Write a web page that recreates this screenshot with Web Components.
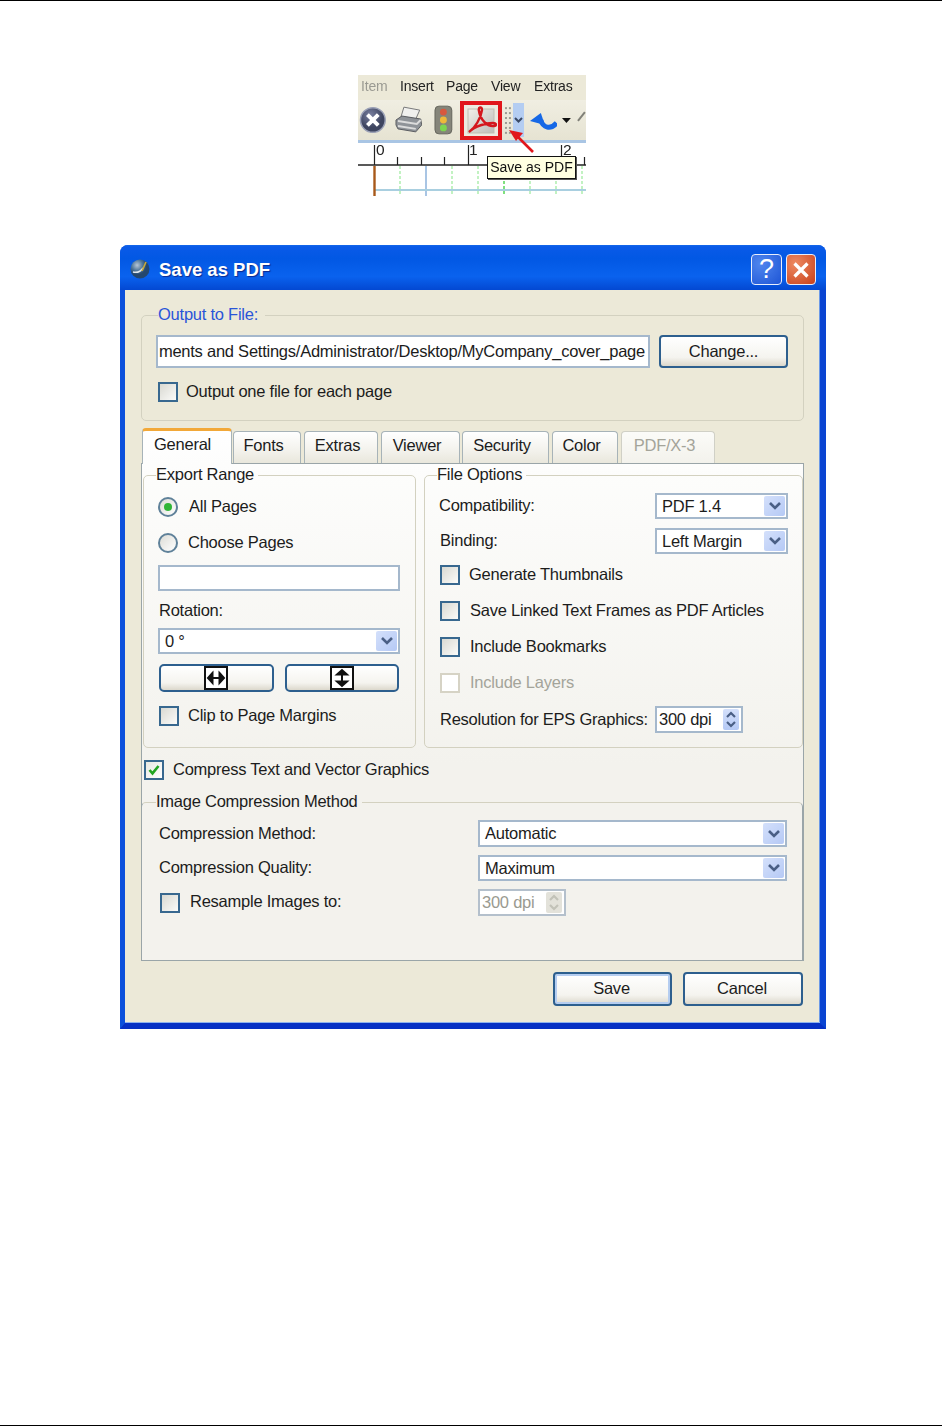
<!DOCTYPE html>
<html lang="en">
<head>
<meta charset="utf-8">
<title>Save as PDF</title>
<style>
html,body{margin:0;padding:0;background:#fff}
body{font-family:"Liberation Sans",Arial,sans-serif;font-size:16.5px;letter-spacing:-.24px;color:#1c1c1c}
</style>
</head>
<body>
<x-page>
  <x-toolstrip></x-toolstrip>
  <x-dialog heading="Save as PDF">
    <x-group legend="Output to File:" accent style="margin:15px 0 0 16px;width:663px;height:116px;--pad:0 14px">
      <x-row style="--c:503px;margin-top:10px;height:33px">
        <x-field style="height:33px;width:494px;justify-content:flex-end">ments and Settings/Administrator/Desktop/MyCompany_cover_page</x-field>
        <x-button style="height:33px;width:129px">Change...</x-button>
      </x-row>
      <x-check style="margin:14px 0 0 2px;--g:8px">Output one file for each page</x-check>
    </x-group>

    <x-tabs style="margin:7px 0 0 17px">
      <x-tab selected style="width:90px">General</x-tab>
      <x-tab style="width:68px;margin-left:1px">Fonts</x-tab>
      <x-tab style="width:74px;margin-left:3px">Extras</x-tab>
      <x-tab style="width:79px;margin-left:3px">Viewer</x-tab>
      <x-tab style="width:87px;margin-left:2px">Security</x-tab>
      <x-tab style="width:66px;margin-left:3px">Color</x-tab>
      <x-tab disabled style="width:94px;margin-left:3px">PDF/X-3</x-tab>
    </x-tabs>

    <x-panel style="margin-left:16px;width:663px;height:498px">
      <x-columns>
        <x-group legend="Export Range" style="width:273px;height:283px;--pad:0 14px">
          <x-radio checked style="margin-top:12px">All Pages</x-radio>
          <x-radio style="margin-top:16px;--rg:10px">Choose Pages</x-radio>
          <x-field style="margin-top:12px;height:26px;width:242px"></x-field>
          <x-label style="margin:10px 0 -1px 1px">Rotation:</x-label>
          <x-combo style="margin-top:8px;width:242px">0 °</x-combo>
          <x-flip style="margin-top:10px"></x-flip>
          <x-check style="margin:14px 0 0 1px;--g:9px">Clip to Page Margins</x-check>
        </x-group>
        <x-group legend="File Options" style="width:379px;height:283px;--pad:0 14px;--c:216px">
          <x-row style="margin-top:8px;height:26px"><x-label>Compatibility:</x-label><x-combo>PDF 1.4</x-combo></x-row>
          <x-row style="margin-top:9px;height:26px"><x-label style="margin-left:1px">Binding:</x-label><x-combo>Left Margin</x-combo></x-row>
          <x-check style="margin:11px 0 0 1px;--g:9px">Generate Thumbnails</x-check>
          <x-check style="margin:16px 0 0 1px">Save Linked Text Frames as PDF Articles</x-check>
          <x-check style="margin:16px 0 0 1px">Include Bookmarks</x-check>
          <x-check disabled style="margin:16px 0 0 1px">Include Layers</x-check>
          <x-row style="margin-top:13px;height:27px"><x-label style="margin-left:1px">Resolution for EPS Graphics:</x-label><x-spin>300 dpi</x-spin></x-row>
        </x-group>
      </x-columns>
      <x-check checked style="margin:12px 0 0 2px;--g:9px">Compress Text and Vector Graphics</x-check>
      <x-group legend="Image Compression Method" closing style="margin:12px 0 0 -1px;width:662px;height:168px;--pad:0 15px 0 17px;--c:319px;--lg:-3px">
        <x-row style="margin-top:8px;height:27px"><x-label>Compression Method:</x-label><x-combo style="height:27px">Automatic</x-combo></x-row>
        <x-row style="margin-top:8px;height:26px"><x-label>Compression Quality:</x-label><x-combo>Maximum</x-combo></x-row>
        <x-row style="margin-top:8px;height:27px"><x-check style="margin-left:1px">Resample Images to:</x-check><x-spin disabled>300 dpi</x-spin></x-row>
      </x-group>
    </x-panel>

    <x-actions>
      <x-button default style="width:119px;height:34px;padding:0 2px 2px 0">Save</x-button>
      <x-button style="width:120px;height:34px;padding:0 2px 2px 0">Cancel</x-button>
    </x-actions>
  </x-dialog>
</x-page>

<script>
class Base extends HTMLElement{
  connectedCallback(){
    if(this.shadowRoot)return;
    this.attachShadow({mode:'open'}).innerHTML='<style>'+this.constructor.css+'</style>'+this.constructor.html(this);
  }
  static html(){return '<slot></slot>'}
}
const def=(name,css,html)=>{
  const C=class extends Base{};
  C.css=css; if(html)C.html=html;
  customElements.define(name,C);
};

def('x-page',`:host{display:flex;flex-direction:column;box-sizing:border-box;width:942px;height:1426px;border-top:1px solid #000;border-bottom:1px solid #000}
.b{filter:blur(.35px);display:flex;flex-direction:column}`,()=>'<div class="b"><slot></slot></div>');

def('x-label',`:host{display:block;line-height:18px;height:20px;white-space:nowrap}`);

def('x-row',`:host{display:grid;grid-template-columns:var(--c,1fr) 1fr;align-items:center}`);

def('x-columns',`:host{display:flex;gap:8px;padding:1px 0 0 1px}`);

def('x-actions',`:host{display:flex;justify-content:flex-end;gap:11px;margin:11px 0 0;padding:0 17px 17px 0}`);

def('x-group',`:host{display:block;box-sizing:border-box;min-width:0;flex:none}
fieldset{box-sizing:border-box;height:100%;margin:0;min-width:0;padding:var(--pad,0);border:1px solid #d3d1c0;border-radius:5px;display:block}
legend{padding:0 4px 0 0;margin-left:var(--lg,-2px);line-height:18px;height:20px;white-space:nowrap}
:host([accent]) legend{color:#2a55d8;margin-left:2px;padding:0 7px 0 0}
:host([closing]) fieldset{border-color:#d3d1c0 #9aa5a8 transparent #9aa5a8;border-bottom:0;border-radius:5px 5px 0 0}`,
 h=>`<fieldset><legend>${h.getAttribute('legend')}</legend><slot></slot></fieldset>`);

def('x-field',`:host{display:flex;align-items:center;box-sizing:border-box;background:#fff;border:2px solid #a5b8cc;overflow:hidden;white-space:nowrap;padding:0 3px 0 0}`);

def('x-button',`:host{display:flex;align-items:center;justify-content:center;box-sizing:border-box;border:2px solid #2d5f8e;border-radius:4px;background:linear-gradient(#fff,#f5f4ef 70%,#dcd8cc);white-space:nowrap}
:host([default]){box-shadow:inset 0 0 0 2px #b5cdf0}`);

def('x-check',`:host{display:flex;align-items:center;height:20px;gap:var(--g,10px);white-space:nowrap}
span{margin-top:-2px}
i{display:block;box-sizing:border-box;width:20px;height:20px;flex:none;border:2px solid #38688f;background:linear-gradient(135deg,#d9d9d2,#fbfbf9)}
svg{display:block;width:16px;height:16px}
:host([checked]) i{background:linear-gradient(135deg,#e8e8e2,#fff)}
:host([disabled]){color:#a4a49a}
:host([disabled]) i{border-color:#d6d3c5;background:#fff}`,
 h=>`<i>${h.hasAttribute('checked')?'<svg viewBox="0 0 16 16"><path d="M3.5 8l3 3.4L12.5 4" fill="none" stroke="#22a522" stroke-width="2.6"/></svg>':''}</i><span><slot></slot></span>`);

def('x-radio',`:host{display:flex;align-items:center;height:20px;gap:var(--rg,11px);white-space:nowrap}
span{margin-top:-2px}
i{display:grid;place-items:center;box-sizing:border-box;width:20px;height:20px;flex:none;border:2px solid #5f8199;border-radius:50%;background:linear-gradient(135deg,#dcdcd6,#fff)}
b{width:8px;height:8px;border-radius:50%;background:#2fb536}`,
 h=>`<i>${h.hasAttribute('checked')?'<b></b>':''}</i><span><slot></slot></span>`);

def('x-combo',`:host{display:flex;align-items:center;justify-content:space-between;box-sizing:border-box;height:26px;background:#fff;border:2px solid #a5b8cc;padding:0 0 0 5px;white-space:nowrap}
i{display:grid;place-items:center;width:21px;align-self:stretch;margin:1px 1px 1px 0;background:linear-gradient(135deg,#d4e0fb,#b5c9f5);border-radius:2px}
svg{width:14px;height:10px;display:block}`,
 ()=>`<span><slot></slot></span><i><svg viewBox="0 0 14 10"><path d="M2 2l5 5 5-5" fill="none" stroke="#4a5f85" stroke-width="2.6"/></svg></i>`);

def('x-spin',`:host{display:flex;align-items:center;justify-content:space-between;box-sizing:border-box;width:88px;height:27px;background:#fff;border:2px solid #a5b8cc;padding:0 0 0 2px;white-space:nowrap}
i{display:flex;flex-direction:column;justify-content:center;gap:1px;width:16px;align-self:stretch;margin:1px 2px 1px 0;background:linear-gradient(#d4e0fb,#b5c9f5);border-radius:2px}
svg{display:block;width:16px;height:9px}
:host([disabled]){color:#9a9a90;border-color:#b4c0cc}
:host([disabled]) i{background:#e3e2da}
:host([disabled]) path{stroke:#c2c2b8}`,
 ()=>`<span><slot></slot></span><i><svg viewBox="0 0 16 9"><path d="M4 7l4-4 4 4" fill="none" stroke="#4a5f85" stroke-width="2.2"/></svg><svg viewBox="0 0 16 9"><path d="M4 2l4 4 4-4" fill="none" stroke="#4a5f85" stroke-width="2.2"/></svg></i>`);

def('x-flip',`:host{display:flex;gap:11px;margin-left:1px}
div{display:flex;align-items:center;justify-content:center;box-sizing:border-box;height:28px;border:2px solid #2d5f8e;border-radius:5px;background:linear-gradient(#fff,#f5f4ef 70%,#dcd8cc)}
svg{display:block;width:24px;height:24px}`,
 ()=>`<div style="width:115px;padding-right:2px"><svg viewBox="0 0 24 24"><rect x="1" y="1" width="22" height="22" fill="#fff" stroke="#111" stroke-width="2"/><path d="M4 12h16M8.500 7L4 12l4.500 5zM15.500 7l4.500 5-4.500 5z" fill="#111" stroke="#111" stroke-width="2"/></svg></div>
 <div style="width:114px"><svg viewBox="0 0 24 24"><rect x="1" y="1" width="22" height="22" fill="#fff" stroke="#111" stroke-width="2"/><path d="M12 4v16M7 8.500L12 4l5 4.500zM7 15.500l5 4.500 5-4.500z" fill="#111" stroke="#111" stroke-width="2"/></svg></div>`);

def('x-tabs',`:host{display:flex;align-items:flex-end;height:35px}`);

def('x-tab',`:host{display:flex;align-items:center;justify-content:center;box-sizing:border-box;height:32px;border:1px solid #a7b3b8;border-bottom:0;border-radius:4px 4px 0 0;background:linear-gradient(#fff,#f3f2ec 60%,#e9e7dc);white-space:nowrap;padding:0 7px 4px 0}
:host([selected]){position:relative;z-index:1;height:36px;margin-bottom:-1px;border-top:3px solid #f2a838;background:linear-gradient(#fff,#fdfdfc);padding:0 9px 7px 0}
:host([disabled]){color:#a4a49a;border-color:#d0d0c6;background:linear-gradient(#fbfbf8,#f3f2ec)}`);

def('x-panel',`:host{display:block;box-sizing:border-box;border:1px solid #9aa5a8;background:linear-gradient(#fdfdfc,#f3f2ed 300px)}`);

def('x-dialog',`:host{display:flex;flex-direction:column;box-sizing:border-box;width:706px;height:784px;margin:49px 0 0 120px;border-radius:8px 8px 0 0;overflow:hidden;background:#0a4fd8}
header{display:flex;align-items:center;height:45px;flex:none;padding:4px 10px 0 10px;box-sizing:border-box;background:linear-gradient(#1468ea,#0a5ae8 4%,#0258e4 30%,#0a62ee 70%,#0348d2);color:#fff;font-weight:bold;font-size:18.500px;letter-spacing:0;text-shadow:1px 1px 1px #0a2a90}
h1{font:inherit;margin:0 0 0 9px;flex:1;padding-top:1px}
.g{display:block;width:20px;height:20px;margin-top:-1px}
.c{display:flex;align-items:center;justify-content:center;box-sizing:border-box;width:31px;height:31px;border:1px solid #e8eefc;border-radius:4px;color:#fff;margin-left:4px;background:radial-gradient(circle at 30% 30%,#4f86ee,#1e55d6);font-weight:normal;font-size:27px;text-shadow:none}
.c.x{background:radial-gradient(circle at 30% 30%,#ee8a62,#c8401a);width:30px}
.c svg{display:block;width:20px;height:20px}
main{flex:1;display:flex;flex-direction:column;background:#ece9d8;border-style:solid;border-width:0 6px 6px 5px;border-color:#0b50dc #0a44d2 #0630c4 #0b50dc;box-shadow:inset 0 -1px #8db2ee,inset -1px 0 #6c9ae8}`,
 h=>`<header><svg class="g" viewBox="0 0 20 20"><defs><radialGradient id="o" cx=".35" cy=".3"><stop offset="0" stop-color="#b6c6d6"/><stop offset=".6" stop-color="#4d7498"/><stop offset="1" stop-color="#24476e"/></radialGradient></defs><circle cx="10" cy="10" r="9.500" fill="url(#o)"/><path d="M3 13c4 1 8-1 10-4" stroke="#dfe7ee" stroke-width="1.500" fill="none"/><path d="M12 12l4-9" stroke="#c8a93a" stroke-width="1.600"/></svg><h1>${h.getAttribute('heading')}</h1><span class="c">?</span><span class="c x"><svg viewBox="0 0 20 20"><path d="M3.500 3.500l13 13M16.500 3.500l-13 13" stroke="#fff" stroke-width="3.200"/></svg></span></header><main><slot></slot></main>`);

def('x-toolstrip',`:host{display:block;position:relative;width:228px;height:121px;margin:74px 0 0 358px;background:#ece9d8;overflow:hidden;font-size:14px;letter-spacing:-.2px;color:#222}
nav{display:grid;grid-template-columns:39px 46px 45px 43px 1fr;box-sizing:border-box;height:25px;padding:0 0 3px 3px;align-items:center;white-space:nowrap}
.tools{display:flex;align-items:center;height:40px;background:linear-gradient(#f0eee2,#e6e3d2)}
svg{display:block}
.pdf{box-sizing:border-box;width:42px;height:39px;margin-left:7px;border:4px solid #e1161c;background:#eceae0;display:grid;place-items:center}
.drop{box-sizing:border-box;width:11px;height:34px;background:#b4cdf2;display:grid;place-items:center}
.tip{position:absolute;left:129px;top:81px;box-sizing:border-box;width:89px;height:23px;background:#ffffe1;border:1px solid #111;box-shadow:1px 1px 0 #555;font-size:14px;letter-spacing:0;line-height:21px;text-align:center;white-space:nowrap;color:#111}
.arrow{position:absolute;left:0;top:0}`,
 ()=>`<nav><span style="color:#9a9a92">Item</span><span>Insert</span><span>Page</span><span>View</span><span>Extras</span></nav>
 <div class="tools">
  <svg width="28" height="28" viewBox="0 0 28 28" style="margin-left:1px"><defs><radialGradient id="s" cx=".4" cy=".3"><stop offset="0" stop-color="#7a80a0"/><stop offset="1" stop-color="#3e4560"/></radialGradient></defs><circle cx="14" cy="14" r="12.500" fill="url(#s)" stroke="#9aa0b6" stroke-width="1.500"/><path d="M8.500 8.500l11 11M19.500 8.500l-11 11" stroke="#fff" stroke-width="4"/></svg>
  <svg width="28" height="28" viewBox="0 0 28 28" style="margin-left:8px"><path d="M9 1l16 3-4 9-15-2z" fill="#f0f0ee" stroke="#77787a"/><path d="M1 14l6-4 19 3 1 6-6 7-18-3-2-4z" fill="#8f9398" stroke="#5a5c60"/><path d="M3 15l19 3 4-4M3 20l18 3" stroke="#dcdcdc" stroke-width="2" fill="none"/></svg>
  <svg width="19" height="30" viewBox="0 0 19 30" style="margin-left:12px"><rect x="1" y="1" width="17" height="28" rx="4" fill="#85857a" stroke="#64645c"/><circle cx="9.500" cy="7" r="3.500" fill="#d8583e"/><circle cx="9.500" cy="15" r="3.500" fill="#eeb93a"/><circle cx="9.500" cy="23" r="3.500" fill="#7cd650"/></svg>
  <div class="pdf"><svg width="32" height="30" viewBox="0 0 32 30"><defs><linearGradient id="p" x1="0" y1="0" x2="1" y2="1"><stop offset="0" stop-color="#f2f0ea"/><stop offset="1" stop-color="#bdbdb8"/></linearGradient></defs><rect x="3" y="4" width="26" height="24" fill="url(#p)" stroke="#c0bdb2"/><path d="M4 27C10 23 16 13 17 5c0-4-4-3-3 1 1 8 8 16 15 15 3 0 3-3-1-3C21 18 10 21 4 27z" fill="none" stroke="#d4181e" stroke-width="2.400"/></svg></div>
  <svg width="9" height="30" viewBox="0 0 9 30" style="margin-left:2px"><g fill="#9a9a92"><rect x="1" y="2" width="2" height="2"/><rect x="5" y="2" width="2" height="2"/><rect x="1" y="7" width="2" height="2"/><rect x="5" y="7" width="2" height="2"/><rect x="1" y="12" width="2" height="2"/><rect x="5" y="12" width="2" height="2"/><rect x="1" y="17" width="2" height="2"/><rect x="5" y="17" width="2" height="2"/><rect x="1" y="22" width="2" height="2"/><rect x="5" y="22" width="2" height="2"/><rect x="1" y="27" width="2" height="2"/><rect x="5" y="27" width="2" height="2"/></g></svg>
  <div class="drop"><svg width="9" height="6" viewBox="0 0 9 6"><path d="M1 1l3.500 3.500L8 1" fill="none" stroke="#3a4a66" stroke-width="2"/></svg></div>
  <svg width="30" height="22" viewBox="0 0 30 22" style="margin:2px 0 0 4px"><path d="M13 10c2 8 10 10 16 3" fill="none" stroke="#1668e6" stroke-width="5"/><path d="M2 11L13 3l4 12z" fill="#1668e6"/></svg>
  <svg width="9" height="5" viewBox="0 0 9 5" style="margin-left:5px"><path d="M0 0h9L4.500 5z" fill="#111"/></svg>
  <svg width="9" height="14" viewBox="0 0 9 14" style="margin:0 0 8px 6px"><path d="M1 12L8 3" stroke="#808078" stroke-width="2" fill="none"/></svg>
 </div>
 <svg width="228" height="56" viewBox="0 0 228 56" style="background:#fff">
  <rect width="228" height="3" fill="#a9c5e4"/>
  <g stroke="#c2f2c2" stroke-width="2" stroke-dasharray="3 2"><path d="M42 26v30M94 26v30M120 26v30M172 26v30M198 26v30M224 26v30"/></g>
  <path d="M146 26v30" stroke="#7fe07f" stroke-width="2" stroke-dasharray="3 2"/>
  <path d="M68 26v30" stroke="#a9c5e4" stroke-width="2"/>
  <path d="M17 50h211" stroke="#a9cfe0" stroke-width="2"/>
  <path d="M0 25h228" stroke="#222" stroke-width="1.300"/>
  <path d="M16.500 5v20M110.500 5v20M203.500 5v20M39.500 17v8M63.500 17v8M86.500 17v8M133.500 17v8M156.500 17v8M180.500 17v8M226.500 17v8" stroke="#222" stroke-width="1.200"/>
  <text x="18" y="15" font-size="15.500" fill="#222" font-family="Liberation Sans">0</text>
  <text x="111" y="15" font-size="15.500" fill="#222" font-family="Liberation Sans">1</text>
  <text x="205" y="15" font-size="15.500" fill="#222" font-family="Liberation Sans">2</text>
  <path d="M16.500 26v30" stroke="#a8591a" stroke-width="2.400"/>
 </svg>
 <svg class="arrow" width="228" height="121" viewBox="0 0 228 121"><path d="M175 77L160 62" stroke="#e1161c" stroke-width="2.600"/><path d="M151 55l14 3-7 8z" fill="#e1161c"/></svg>
 <div class="tip">Save as PDF</div>`);
</script>
</body>
</html>
